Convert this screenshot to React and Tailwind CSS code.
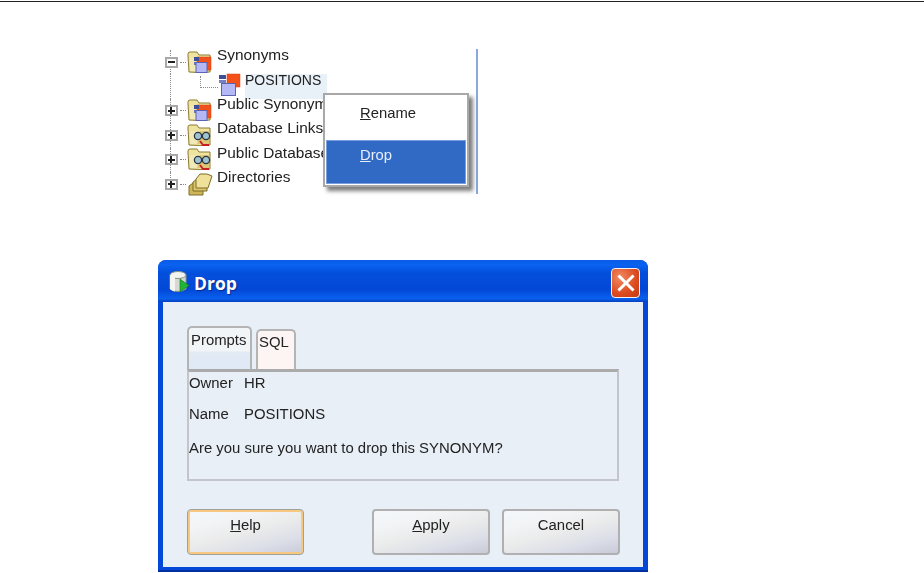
const FONT = "font-['Liberation_Sans',Arial,sans-serif]";

function Folder({ children }) {
  return (
    <svg width="28" height="23" viewBox="0 0 28 23" className="shrink-0">
      <path d="M2 5 L2 3 Q2 1 4 1 L11 1 L13 4 L24 4 L24 21 Q13 22 3 21 Z" fill="#efe3a0" stroke="#8c7a30" />
      <path d="M4 7 L23 7 L23 20 L4 20 Z" fill="#dcc878" />
      <path d="M4 7 L14 7 L11 20 L4 20 Z" fill="#f2e9b8" />
      {children}
    </svg>
  );
}

function SynIcon() {
  return (
    <g>
      <rect x="11" y="6" width="14" height="13" fill="#f0521c" stroke="#d84010" strokeWidth="0.5" />
      <rect x="8" y="6" width="5" height="4" fill="#3d4f98" />
      <rect x="8" y="11" width="3" height="3" fill="#6a78b8" />
      <rect x="10" y="11.5" width="11" height="10" fill="#b4b8f4" stroke="#5a64b0" />
    </g>
  );
}

function PositionsIcon() {
  return (
    <svg width="26" height="24" viewBox="0 0 26 24" className="-mt-[3px] shrink-0">
      <rect x="10" y="1" width="13" height="13" fill="#f4501a" stroke="#dc4210" strokeWidth="0.5" />
      <rect x="2" y="2" width="7" height="4" fill="#3d4f98" />
      <rect x="2" y="7" width="7" height="3" fill="#7482c0" />
      <rect x="4.5" y="10.5" width="14" height="12" fill="#b4b8f4" stroke="#5a64b0" />
    </svg>
  );
}

function LinkIcon() {
  return (
    <g>
      <circle cx="12" cy="12" r="3.6" fill="#9ec4d4" stroke="#2c3440" strokeWidth="1.3" />
      <circle cx="20" cy="12" r="3.6" fill="#9ec4d4" stroke="#2c3440" strokeWidth="1.3" />
      <path d="M15 11 H17" stroke="#2c3440" strokeWidth="1.3" />
      <path d="M14 17 L17 21 H23" stroke="#c82020" strokeWidth="1.8" fill="none" />
    </g>
  );
}

function DirIcon() {
  return (
    <svg width="28" height="23" viewBox="0 0 28 23" className="shrink-0">
      <path d="M3 13 L7 10 H17 V22 H3 Z" fill="#cdb558" stroke="#7d6c28" />
      <path d="M7 9 L11 6 H21 V18 H7 Z" fill="#dcc76c" stroke="#7d6c28" />
      <path d="M10 6 L14 1 H21 L26 3 L22 15 H10 Z" fill="#efe09a" stroke="#7d6c28" />
    </svg>
  );
}

function Expander({ sign }) {
  return (
    <span className="relative flex h-[11px] w-[13px] items-center justify-center border-2 border-[#a8a8a8] bg-white">
      <span className="h-[2px] w-[7px] bg-[#222]" />
      {sign === "+" && <span className="absolute h-[7px] w-[2px] bg-[#222]" />}
    </span>
  );
}

function TreeRow({ sign, icon, label, child, selected, last }) {
  return (
    <div className="flex h-[24.4px] items-center">
      <div className="relative flex h-full w-[18px] shrink-0 items-center justify-center">
        <span className={`absolute left-[8px] top-0 w-0 border-l border-dotted border-[#8a8a8a] ${last ? "h-1/2" : "h-full"}`} />
        {sign && <span className="relative"><Expander sign={sign} /></span>}
      </div>
      {child ? (
        <span className="mb-[10px] ml-[20px] h-[12px] w-[18px] shrink-0 border-b border-l border-dotted border-[#8a8a8a]" />
      ) : (
        <span className="h-0 w-[6px] shrink-0 border-t border-dotted border-[#8a8a8a]" />
      )}
      <div className={child ? "-ml-[1px] w-[28px] shrink-0" : "w-[31px] shrink-0"}>{icon}</div>
      {selected ? (
        <span className="mb-[1px] h-[25px] w-[82px] shrink-0 whitespace-nowrap bg-[#e8f0f8] text-[14px] leading-[13px] text-[#222]">{label}</span>
      ) : (
        <span className="mb-[15px] whitespace-nowrap text-[15.4px] leading-[17px] text-[#222]">{label}</span>
      )}
    </div>
  );
}

function Tree() {
  return (
    <div className="relative ml-[160px] mt-[47px] h-[145px] w-[318px] border-r-2 border-[#8aa8de] pl-[2px] pt-px blur-[0.35px]">
      <TreeRow sign="-" label="Synonyms" icon={<Folder><SynIcon /></Folder>} />
      <TreeRow child label="POSITIONS" selected icon={<PositionsIcon />} />
      <TreeRow sign="+" label="Public Synonyms" icon={<Folder><SynIcon /></Folder>} />
      <TreeRow sign="+" label="Database Links" icon={<Folder><LinkIcon /></Folder>} />
      <TreeRow sign="+" label="Public Database Links" icon={<Folder><LinkIcon /></Folder>} />
      <TreeRow sign="+" last label="Directories" icon={<DirIcon />} />
      <div className="absolute left-[163px] top-[44px] flex h-[94px] w-[146px] flex-col border-2 border-[#a8a8a8] bg-white p-[1px] shadow-[4px_4px_4px_rgba(70,70,70,0.7)]">
        <div className="flex h-[44px] items-start pl-[34px] pt-[9px] text-[14.8px] leading-[17px] text-[#222]">
          <span><u>R</u>ename</span>
        </div>
        <div className="flex h-[44px] items-start border border-[#7a9fe0] bg-[#316ac5] pl-[33px] pt-[6px] text-[14.8px] leading-[17px] text-[#e8eefa]">
          <span><u>D</u>rop</span>
        </div>
      </div>
    </div>
  );
}

function TitleBar() {
  return (
    <div className="flex h-[42px] items-center rounded-t-[8px] bg-[linear-gradient(180deg,#0a5ce8_0%,#0a62f0_12%,#0350dc_30%,#0348d6_70%,#0a60ee_92%,#0340c0_100%)] pl-[10px] pr-[8px] pt-[4px]">
      <svg width="22" height="24" viewBox="0 0 22 24" className="-mt-[2px] shrink-0">
        <path d="M2 5 V19 Q10 24 18 19 V5 Z" fill="#d6d8d4" stroke="#8a8f88" />
        <ellipse cx="10" cy="5" rx="8" ry="3.5" fill="#f2f3f0" stroke="#8a8f88" />
        <path d="M2 5 V19 Q4 21 7 21.5 V7 Z" fill="#f4f5f2" />
        <path d="M12 9 L21 15.5 L12 22 Z" fill="#21b534" stroke="#14752a" strokeWidth="0.6" />
      </svg>
      <span className="ml-[4px] mt-[2px] font-['Open_Sans',sans-serif] text-[17.5px] font-bold leading-none text-white [text-shadow:1px_1px_1px_#0a2a90]">Drop</span>
      <button className="ml-auto flex h-[30px] w-[29px] items-center justify-center rounded-[4px] border border-[#f2f2f2] bg-[radial-gradient(circle_at_30%_30%,#f08a62,#dc4a20_60%,#c23a12)]">
        <svg width="18" height="18" viewBox="0 0 18 18">
          <path d="M2.5 2.5 L15.5 15.5 M15.5 2.5 L2.5 15.5" stroke="#fff" strokeWidth="3" strokeLinecap="square" />
        </svg>
      </button>
    </div>
  );
}

function Tabs() {
  return (
    <div className="flex h-[43px] items-end">
      <div className="h-[43px] w-[65px] rounded-t-[5px] border-x-2 border-t-2 border-b-0 border-[#b4b4b4] bg-[linear-gradient(180deg,#f2f5f8_0%,#f2f5f8_55%,#e2eaf5_60%,#dfe8f6_100%)] pl-[2px] pt-[4px] text-[14.9px] leading-[17px] text-[#222]">
        Prompts
      </div>
      <div className="ml-[4px] h-[40px] w-[40px] rounded-t-[5px] border-x-2 border-t-2 border-b-0 border-[#b4b4b4] bg-[#fdf5f4] pl-[1px] pt-[3px] text-[14.9px] leading-[17px] text-[#222]">
        SQL
      </div>
    </div>
  );
}

function Btn({ children, w, focus, className = "" }) {
  return (
    <button className={`flex h-[46px] justify-center rounded-[4px] ${focus ? "border border-[#a0a09a] pt-[7px] shadow-[inset_0_0_0_2px_#f6c880]" : "border-2 border-[#b0b0b0] pt-[6px]"} bg-[linear-gradient(165deg,#f4f8fc_0%,#f2f4f6_25%,#ebebeb_50%,#dcdfe8_75%,#c8cbd8_100%)] text-[14.9px] leading-[17px] text-[#222] ${w} ${className}`}>
      <span>{children}</span>
    </button>
  );
}

function Dialog() {
  return (
    <div className="ml-[158px] mt-[66px] h-[312px] w-[490px] rounded-t-[8px] bg-[#0348d6] shadow-[inset_0_-2px_0_#0030a0]">
      <TitleBar />
      <div className="mx-[5px] h-[265px] bg-[#e8eff7] pl-[24px] pt-[24px] blur-[0.3px]">
        <Tabs />
        <div className="flex h-[112px] w-[432px] flex-col border-2 border-t-[3px] border-[#c4c4cc] border-t-[#ababab] pt-[3px] text-[14.9px] leading-[17px] text-[#222]">
          <div className="flex"><span className="w-[55px]">Owner</span><span>HR</span></div>
          <div className="mt-[14px] flex"><span className="w-[55px]">Name</span><span>POSITIONS</span></div>
          <div className="mt-[17px] whitespace-nowrap">Are you sure you want to drop this SYNONYM?</div>
        </div>
        <div className="mt-[28px] flex">
          <Btn w="w-[117px]" focus><u>H</u>elp</Btn>
          <Btn w="w-[118px]" className="ml-[68px]"><u>A</u>pply</Btn>
          <Btn w="w-[118px]" className="ml-[12px]">Cancel</Btn>
        </div>
      </div>
    </div>
  );
}

export default function App() {
  return (
    <div className={`flex h-[573px] w-[924px] flex-col overflow-hidden bg-white ${FONT}`}>
      <div className="mt-px h-px w-full bg-[#222]" />
      <Tree />
      <Dialog />
    </div>
  );
}
